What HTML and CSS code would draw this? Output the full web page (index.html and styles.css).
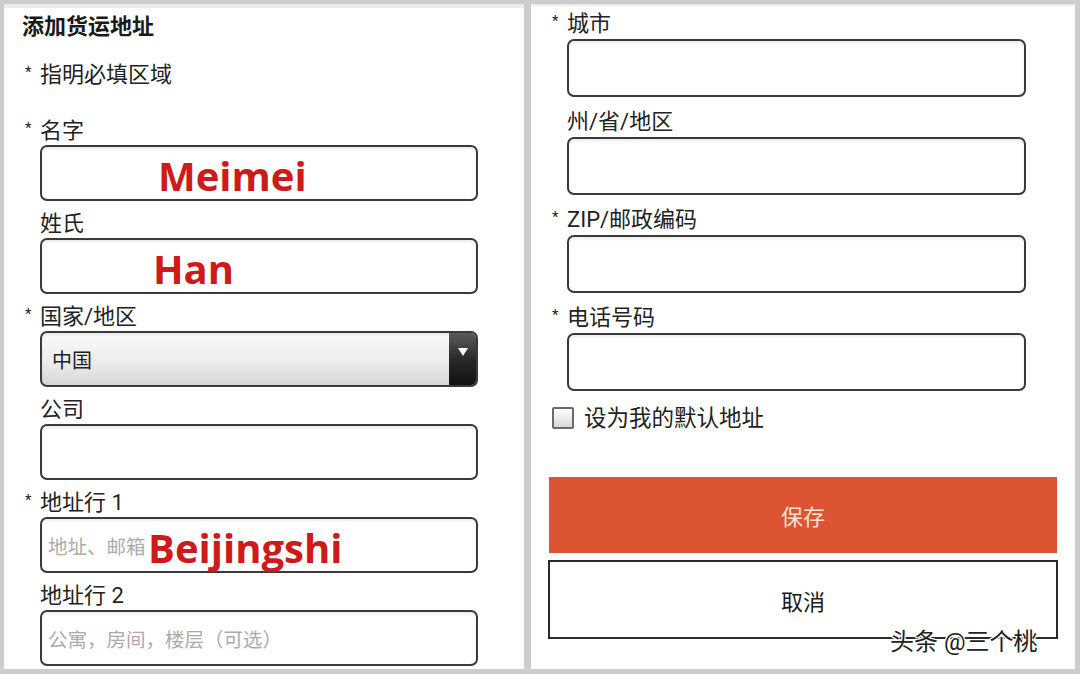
FILE: index.html
```html
<!DOCTYPE html>
<html lang="zh-CN">

<head>
    <meta charset="UTF-8">
    <meta name="viewport" content="width=device-width, initial-scale=1.0">
    <title>添加货运地址</title>
    <link rel="stylesheet" href="styles.css">
</head>

<body>
    <div id="frame">
        <div class="panel" id="left">
            <div class="title">添加货运地址</div>
            <div class="note"><span class="star">*</span>指明必填区域</div>

            <div class="field first">
                <div class="label"><span class="star">*</span>名字</div>
                <div class="input"><span class="typed typed-1">Meimei</span></div>
            </div>
            <div class="field">
                <div class="label"><span class="star"></span>姓氏</div>
                <div class="input"><span class="typed typed-2">Han</span></div>
            </div>
            <div class="field">
                <div class="label"><span class="star">*</span>国家/地区</div>
                <div class="input select">
                    <span class="select-value">中国</span>
                    <span class="select-btn">
                        <svg width="12" height="10" viewBox="0 0 12 10">
                            <path d="M1 1 L11 1 L6 9 Z" fill="#fff" />
                        </svg>
                    </span>
                </div>
            </div>
            <div class="field">
                <div class="label"><span class="star"></span>公司</div>
                <div class="input"></div>
            </div>
            <div class="field">
                <div class="label"><span class="star">*</span>地址行 1</div>
                <div class="input">
                    <span class="placeholder">地址、邮箱</span>
                    <span class="typed typed-3">Beijingshi</span>
                </div>
            </div>
            <div class="field">
                <div class="label"><span class="star"></span>地址行 2</div>
                <div class="input"><span class="placeholder">公寓，房间，楼层（可选）</span></div>
            </div>
        </div>

        <div class="panel" id="right">
            <div class="field">
                <div class="label"><span class="star">*</span>城市</div>
                <div class="input"></div>
            </div>
            <div class="field">
                <div class="label"><span class="star"></span>州/省/地区</div>
                <div class="input"></div>
            </div>
            <div class="field">
                <div class="label"><span class="star">*</span>ZIP/邮政编码</div>
                <div class="input"></div>
            </div>
            <div class="field">
                <div class="label"><span class="star">*</span>电话号码</div>
                <div class="input"></div>
            </div>
            <div class="check-row">
                <span class="checkbox"></span>
                <span>设为我的默认地址</span>
            </div>
            <div class="btn save">保存</div>
            <div class="btn cancel">取消</div>
            <div class="watermark">头条 @三个桃</div>
        </div>
    </div>
</body>

</html>
```

FILE: styles.css
```css
body {
    margin: 0;
    background-color: #cdcdcd;
    font-family: "Roboto", "Noto Sans CJK SC", sans-serif;
    color: #222;
}

#frame {
    display: flex;
    gap: 7px;
    padding: 4px 5px 5px 4px;
    height: 674px;
    box-sizing: border-box;
    width: 1080px;
}

.panel {
    background-color: #fff;
    border-top: 4px solid #ececec;
    overflow: hidden;
    position: relative;
}

#left {
    width: 520px;
    padding: 7px 0 0 18px;
    box-sizing: border-box;
}

#right {
    width: 544px;
    padding: 0 0 0 18px;
    box-sizing: border-box;
    border-top-width: 2px;
}

.title {
    font-size: 22px;
    font-weight: bold;
    line-height: 24px;
    color: #1a1a1a;
}

.note,
.label {
    display: flex;
    font-size: 22px;
    line-height: 24px;
}

.note {
    margin-top: 24px;
}

.star {
    width: 18px;
    flex: none;
    font-size: 15px;
    line-height: 18px;
    padding-left: 3px;
    box-sizing: border-box;
}

.field .label {
    margin: 11px 0 2px;
}

#left .field.first .label {
    margin-top: 32px;
}

.input {
    margin-left: 18px;
    width: 438px;
    height: 56px;
    box-sizing: border-box;
    border: 2px solid #3a3a3a;
    border-radius: 7px;
    background-color: #fff;
    box-shadow: inset 0 2px 3px rgba(0, 0, 0, 0.08);
    position: relative;
    display: flex;
    align-items: center;
}

#left .field .input {
    margin-bottom: 0.4px;
}

#right .field .label {
    margin: 13px 0 3px;
}

#right .field:first-child .label {
    margin-top: 6px;
}

#right .input {
    width: 459px;
    height: 58px;
}

.typed {
    position: absolute;
    top: calc(50% + 3px);
    transform: translateY(-50%);
    font-family: "Open Sans", sans-serif;
    font-weight: bold;
    font-size: 40px;
    color: #cf1a1a;
    line-height: 1;
}

.typed-1 {
    left: 116px;
}

.typed-2 {
    left: 111px;
}

.typed-3 {
    left: 106px;
}

.placeholder {
    padding-left: 6px;
    font-size: 19.5px;
    color: #ababab;
    white-space: nowrap;
}

.select {
    background: linear-gradient(#fbfbfb, #ececec 55%, #d6d6d6);
    overflow: hidden;
}

.select-value {
    flex: 1;
    padding-left: 10px;
    font-size: 20px;
}

.select-btn {
    width: 27px;
    height: 100%;
    background: linear-gradient(#5a5a5a, #2a2a2a 50%, #111);
    display: flex;
    justify-content: center;
    padding-top: 14px;
    box-sizing: border-box;
}

.check-row {
    display: flex;
    align-items: center;
    gap: 10px;
    margin: 15px 0 0 3px;
    font-size: 22.5px;
    line-height: 24px;
}

.checkbox {
    width: 18px;
    height: 18px;
    border: 2px solid #6a6a6a;
    border-radius: 2px;
    background: linear-gradient(#fff, #d8d8d8);
}

.btn {
    display: flex;
    align-items: center;
    justify-content: center;
    font-size: 22px;
    box-sizing: border-box;
}

.save {
    margin-top: 47px;
    width: 508px;
    height: 76px;
    background-color: #dc5431;
    color: #fbe1d2;
}

.cancel {
    margin: 7px 0 0 -1px;
    width: 510px;
    height: 79px;
    border: 2px solid #2a2a2a;
    color: #1a1a1a;
}

.watermark {
    position: absolute;
    left: 359px;
    top: 616px;
    font-size: 24px;
    color: #222;
    text-shadow: 1px 1px 0 #fff, -1px -1px 0 #fff, 1px -1px 0 #fff, -1px 1px 0 #fff;
}
```
